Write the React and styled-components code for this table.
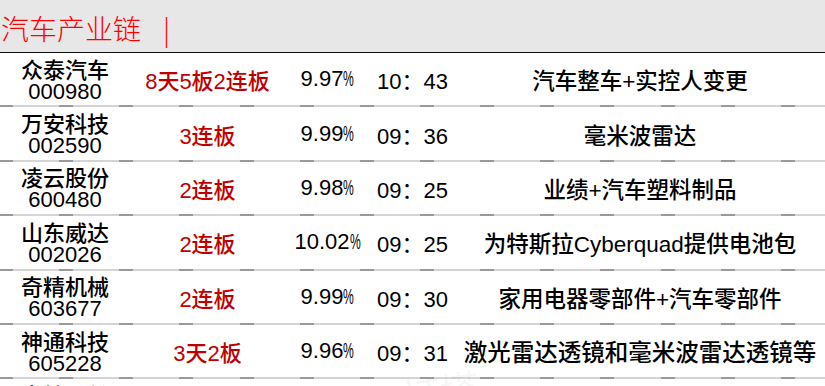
import React from "react";
import styled, { createGlobalStyle } from "styled-components";

const Global = createGlobalStyle`
  html, body { margin: 0; padding: 0; background: #fff; }
  body { font-family: "Liberation Sans", "Noto Sans CJK SC", sans-serif; }
`;

const Page = styled.div`
  position: relative;
  width: 825px;
  height: 386px;
  overflow: hidden;
  background: #fff;
`;

const Header = styled.div`
  height: 53px;
  background: #e7e7e7;
  border-bottom: 1px solid #111;
  box-sizing: border-box;
  display: flex;
  align-items: center;
  padding: 4px 0 0 1px;
  color: #ff0000;
  font-family: "Noto Sans CJK SC", sans-serif;
  font-size: 28px;
  font-weight: 300;
  line-height: 1;
`;

const Bar = styled.span`
  margin-left: 22px;
  font-weight: 300;
`;

const Row = styled.div`
  display: grid;
  grid-template-columns: 130px 155px 85px 85px 370px;
  align-items: center;
  height: 54.4px;
  box-sizing: border-box;
  border-bottom: 2px solid transparent;
  border-image: repeating-linear-gradient(90deg, #9a9a9a 0 14px, #d4d4d4 14px 60px) 1;
  font-size: 22px;
  color: #000;
`;

const NameCell = styled.div`
  display: flex;
  flex-direction: column;
  align-items: center;
  line-height: 24px;
  padding-top: 1px;
`;

const Name = styled.span`
  font-family: "Noto Sans CJK SC", sans-serif;
  font-weight: 500;
`;

const Code = styled.span`
  font-family: "Liberation Sans", sans-serif;
`;

const Tag = styled.div`
  text-align: center;
  color: #c00000;
  font-family: "Liberation Sans", "Noto Sans CJK SC", sans-serif;
  font-weight: 500;
`;

const Pct = styled.div`
  text-align: center;
  font-family: "Liberation Sans", sans-serif;
`;

const PctSign = styled.span`
  display: inline-block;
  width: 11px;
  transform: scaleX(0.55);
  transform-origin: left center;
`;

const Time = styled.div`
  text-align: center;
  font-family: "Liberation Sans", "Noto Sans CJK SC", sans-serif;
`;

const Desc = styled.div`
  text-align: center;
  white-space: nowrap;
  font-size: ${(p) => p.$size || 22.5}px;
  font-weight: 500;
  font-family: "Liberation Sans", "Noto Sans CJK SC", sans-serif;
`;

const Watermark = styled.div`
  position: absolute;
  left: 400px;
  top: 362px;
  font-family: "Noto Sans CJK SC", sans-serif;
  font-size: 40px;
  color: rgba(0, 0, 0, 0.05);
  transform: rotate(-8deg);
  pointer-events: none;
`;

const rows = [
  ["众泰汽车", "000980", "8天5板2连板", "9.97", "10：43", "汽车整车+实控人变更"],
  ["万安科技", "002590", "3连板", "9.99", "09：36", "毫米波雷达"],
  ["凌云股份", "600480", "2连板", "9.98", "09：25", "业绩+汽车塑料制品"],
  ["山东威达", "002026", "2连板", "10.02", "09：25", "为特斯拉Cyberquad提供电池包"],
  ["奇精机械", "603677", "2连板", "9.99", "09：30", "家用电器零部件+汽车零部件"],
  ["神通科技", "605228", "3天2板", "9.96", "09：31", "激光雷达透镜和毫米波雷达透镜等", 23.5],
  ["文灿股份", "603348", "2连板", "10.00", "09：40", "汽车铝合金压铸件"],
];

export default function App() {
  return (
    <Page>
      <Global />
      <Header>
        汽车产业链<Bar>|</Bar>
      </Header>
      {rows.map(([name, code, tag, pct, time, desc, size]) => (
        <Row key={code}>
          <NameCell>
            <Name>{name}</Name>
            <Code>{code}</Code>
          </NameCell>
          <Tag>{tag}</Tag>
          <Pct>
            {pct}
            <PctSign>%</PctSign>
          </Pct>
          <Time>{time}</Time>
          <Desc $size={size}>{desc}</Desc>
        </Row>
      ))}
      <Watermark>灯塔</Watermark>
    </Page>
  );
}
